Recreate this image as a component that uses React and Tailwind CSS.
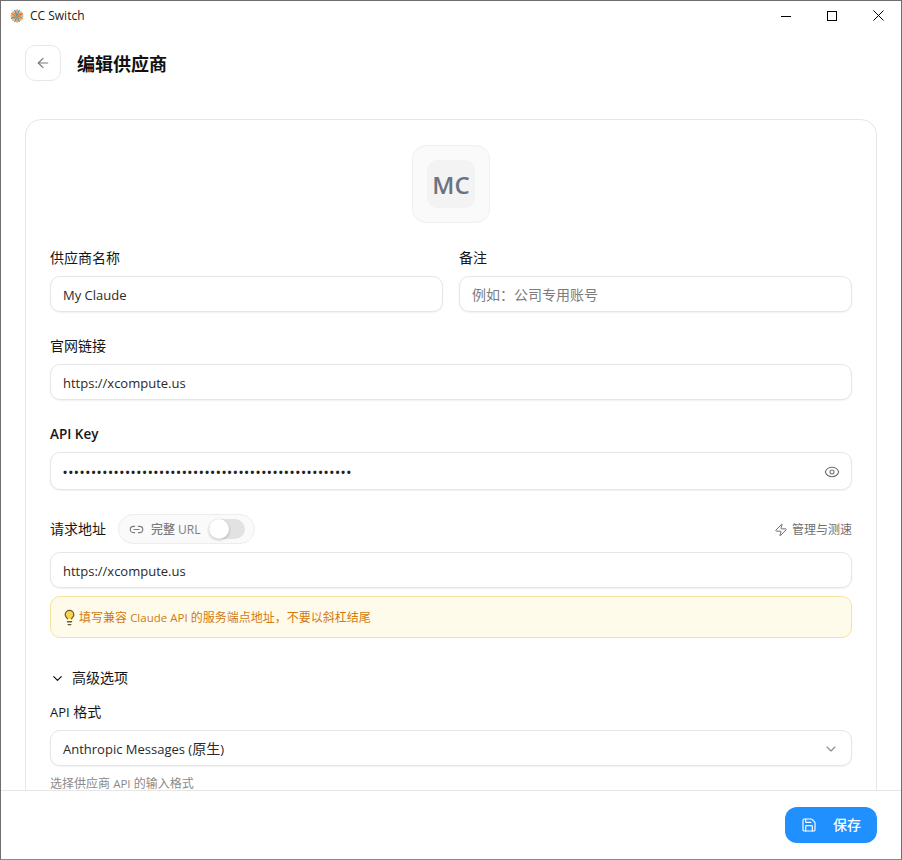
import React from "react";
import { ArrowLeft, Eye, Link2, Zap, ChevronDown, Save, Lightbulb } from "lucide-react";

const font = "font-['Open_Sans','Noto_Sans_CJK_SC',sans-serif]";

function L({ children }) {
  return <span className="text-[13px]">{children}</span>;
}

function Label({ children, className = "" }) {
  return <div className={`h-5 text-sm leading-5 text-[#161616] ${className}`}>{children}</div>;
}

function Box({ children, className = "" }) {
  return (
    <div className={`h-9 flex items-center px-3 pt-[2px] rounded-[10px] border border-[#e6e6e6] bg-white shadow-[0_1px_2px_rgba(0,0,0,0.06)] text-sm text-[#2a2a2a] ${className}`}>
      {children}
    </div>
  );
}

function Logo() {
  const colors = ["#f0883a", "#4b9fb5", "#f0a04a", "#d9683a", "#8fb0a0", "#f07a30", "#e9a050", "#5f93a8"];
  return (
    <svg width="14" height="14" viewBox="0 0 14 14">
      {Array.from({ length: 16 }).map((_, i) => (
        <line key={i} x1="7" y1="7" x2="7" y2="0.6" stroke={colors[i % 8]} strokeWidth="1.5" transform={`rotate(${i * 22.5} 7 7)`} />
      ))}
    </svg>
  );
}

export default function App() {
  return (
    <div className={`${font} w-[902px] h-[860px] bg-white flex flex-col overflow-hidden border border-[#6e6e6e] border-b-[#8a8a8a]`}>
      <div className="h-[29px] shrink-0 flex items-center pl-[9px]">
        <Logo />
        <span className="ml-[6px] text-xs text-[#1a1a1a]">CC Switch</span>
        <div className="ml-auto flex items-center text-black">
          <div className="w-[46px] flex justify-center">
            <svg width="10" height="10" viewBox="0 0 10 10"><path d="M0 5.5H10" stroke="currentColor" strokeWidth="1" /></svg>
          </div>
          <div className="w-[46px] flex justify-center">
            <svg width="10" height="10" viewBox="0 0 10 10"><rect x="0.5" y="0.5" width="9" height="9" fill="none" stroke="currentColor" strokeWidth="1" /></svg>
          </div>
          <div className="w-[46px] flex justify-center">
            <svg width="11" height="11" viewBox="0 0 11 11"><path d="M0.5 0.5L10.5 10.5M10.5 0.5L0.5 10.5" stroke="currentColor" strokeWidth="1" /></svg>
          </div>
        </div>
      </div>

      <div className="flex-1 min-h-0 overflow-hidden px-6 pt-[15px]">
        <div className="flex items-center gap-4 h-9">
          <div className="w-9 h-9 rounded-[10px] border border-[#e8e8e8] flex items-center justify-center text-[#7a7a7a]">
            <ArrowLeft size={16} strokeWidth={1.8} />
          </div>
          <h1 className="text-lg font-bold pt-[1px] text-[#111]">编辑供应商</h1>
        </div>

        <div className="mt-[38px] rounded-2xl border border-[#e6e6e6] px-6 pt-6 pb-6">
          <div className="flex justify-center">
            <div className="mt-[1px] mb-[1px] w-[78px] h-[78px] rounded-[14px] border border-[#f0f0f0] bg-[#fafafa] flex items-center justify-center">
              <div className="w-12 h-12 rounded-[10px] bg-[#f3f3f3] flex items-center justify-center pt-[2px] text-2xl font-semibold text-[#6b7280]">MC</div>
            </div>
          </div>

          <div className="mt-[24px] grid grid-cols-2 gap-4">
            <div>
              <Label>供应商名称</Label>
              <Box className="mt-2"><L>My Claude</L></Box>
            </div>
            <div>
              <Label>备注</Label>
              <Box className="mt-2 text-[#7c7c7c]">例如：公司专用账号</Box>
            </div>
          </div>

          <Label className="mt-6">官网链接</Label>
          <Box className="mt-2"><L>https://xcompute.us</L></Box>

          <Label className="mt-6"><span className="text-[13.5px] font-semibold">API Key</span></Label>
          <Box className="mt-2 h-[38px] justify-between">
            <span className="text-[11px] tracking-[1.54px] font-bold text-[#222]">{"•".repeat(51)}</span>
            <Eye size={16} strokeWidth={1.6} className="text-[#6f6f6f] -mr-[1px]" />
          </Box>

          <div className="mt-6 h-[30px] flex items-center">
            <Label>请求地址</Label>
            <div className="ml-3 h-[30px] w-[137px] rounded-full border border-[#ededed] bg-[#fafafa] flex items-center pl-[10px] text-xs text-[#7d7d7d]">
              <Link2 size={15} strokeWidth={1.8} className="text-[#7d7d7d]" />
              <span className="ml-[7px] pt-[2px] font-medium">完整 URL</span>
              <div className="ml-2 w-9 h-5 rounded-full bg-[#e2e2e2] relative">
                <div className="absolute left-0 top-0 w-5 h-5 rounded-full bg-white shadow-[0_1px_3px_rgba(0,0,0,0.25)]" />
              </div>
            </div>
            <div className="ml-auto flex items-center gap-1 text-xs pt-[1px] text-[#6f6f6f]">
              <Zap size={14} strokeWidth={1.7} />
              <span>管理与测速</span>
            </div>
          </div>

          <Box className="mt-2"><L>https://xcompute.us</L></Box>

          <div className="mt-2 h-[42px] rounded-[10px] border border-[#f4e4a0] bg-[#fffbeb] flex items-center pl-[10px] pr-3 pt-[1px] text-xs text-[#d17a10]">
            <Lightbulb size={17} strokeWidth={1.8} fill="#fcd34d" className="text-[#6b5c30] shrink-0" />
            <span className="ml-[1px]">填写兼容 <span className="text-[11.5px]">Claude API</span> 的服务端点地址，不要以斜杠结尾</span>
          </div>

          <div className="mt-[30px] flex items-center h-5 text-sm text-[#161616]">
            <ChevronDown size={15} strokeWidth={2} className="shrink-0" />
            <span className="ml-[7px]">高级选项</span>
          </div>

          <Label className="mt-[14px]"><L>API</L> 格式</Label>
          <Box className="mt-2 pt-[1px] justify-between">
            <span><L>Anthropic Messages (</L>原生<L>)</L></span>
            <ChevronDown size={16} strokeWidth={1.6} className="text-[#8a8a8a]" />
          </Box>
          <div className="mt-[10px] text-xs leading-4 text-[#8a8a8a]">选择供应商 <span className="text-[11.5px]">API</span> 的输入格式</div>
        </div>
      </div>

      <div className="h-[69px] shrink-0 border-t border-[#e6e6e6] bg-white flex items-start justify-end pr-6 pt-4">
        <div className="w-[92px] h-9 pl-[16px] rounded-xl bg-[#2090ff] flex items-center gap-[16px] text-white text-sm font-medium">
          <Save size={16} strokeWidth={1.7} />
          <span>保存</span>
        </div>
      </div>
    </div>
  );
}
